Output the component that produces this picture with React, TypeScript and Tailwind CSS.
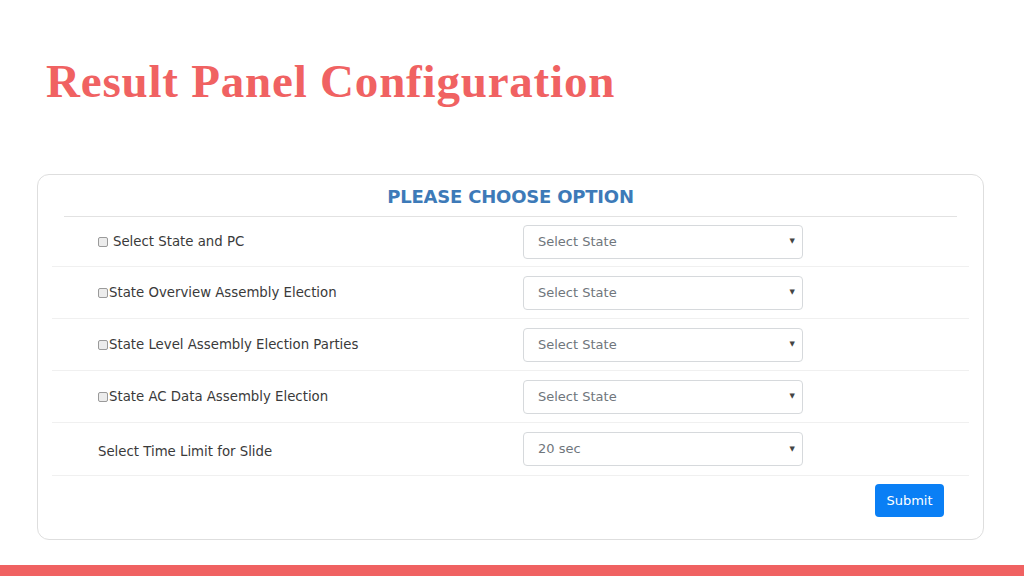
import React from "react";

const rows = [
  { label: "Select State and PC", spaced: true, value: "Select State", h: "h-[50px]" },
  { label: "State Overview Assembly Election", value: "Select State", h: "h-[52px]" },
  { label: "State Level Assembly Election Parties", value: "Select State", h: "h-[52px]" },
  { label: "State AC Data Assembly Election", value: "Select State", h: "h-[52px]" },
];

function Box() {
  return (
    <span className="inline-block w-[10px] h-[10px] rounded-[2px] border border-[#9a9a9a] bg-[#ececec] align-middle" />
  );
}

function FakeSelect({ value }: { value: string }) {
  return (
    <div className="w-[280px] h-[34px] rounded-[4px] border border-[#d6d9dc] bg-white flex items-center justify-between pl-[14px] pr-[7px] text-[13px] text-[#6f767c]">
      <span>{value}</span>
      <span className="text-[7px] text-[#444]">▼</span>
    </div>
  );
}

export default function App() {
  return (
    <div
      className="w-[1024px] h-[576px] bg-white flex flex-col overflow-hidden"
      style={{ fontFamily: '"DejaVu Sans", "Noto Sans", sans-serif' }}
    >
      <div className="h-[174px] pl-[46px] pt-[52px]">
        <h1
          className="text-[47px] leading-[58px] font-bold text-[#f06262] tracking-[0.8px]"
          style={{ fontFamily: '"Liberation Serif", "DejaVu Serif", serif' }}
        >
          Result Panel Configuration
        </h1>
      </div>

      <div className="mx-[37px] w-[947px] h-[366px] rounded-[12px] border border-[#dedede] flex flex-col">
        <div className="mx-[26px] h-[42px] border-b border-[#e2e2e2] flex items-center justify-center">
          <h2 className="text-[18px] font-bold text-[#3d7ab8] tracking-[-0.2px] pt-[2px]">
            PLEASE CHOOSE OPTION
          </h2>
        </div>

        <div className="mx-[14px] flex flex-col">
          {rows.map((r) => (
            <div
              key={r.label}
              className={`${r.h} border-b border-[#f0f0f0] flex items-center`}
            >
              <div className="w-[471px] pl-[46px] text-[13.3px] text-[#3a3a3a] flex items-center">
                <Box />
                <span className={r.spaced ? "ml-[5px]" : "ml-[1px]"}>{r.label}</span>
              </div>
              <FakeSelect value={r.value} />
            </div>
          ))}
          <div className="h-[53px] border-b border-[#f0f0f0] flex items-center">
            <div className="w-[471px] pl-[46px] pt-[6px] text-[13.3px] text-[#3a3a3a]">
              Select Time Limit for Slide
            </div>
            <FakeSelect value="20 sec" />
          </div>
        </div>

        <div className="flex justify-end pr-[39px] pt-[8px]">
          <button className="w-[69px] h-[33px] rounded-[4px] bg-[#0a7ff5] text-white text-[13px]">
            Submit
          </button>
        </div>
      </div>

      <div className="mt-auto h-[11px] bg-[#f06262]" />
    </div>
  );
}
